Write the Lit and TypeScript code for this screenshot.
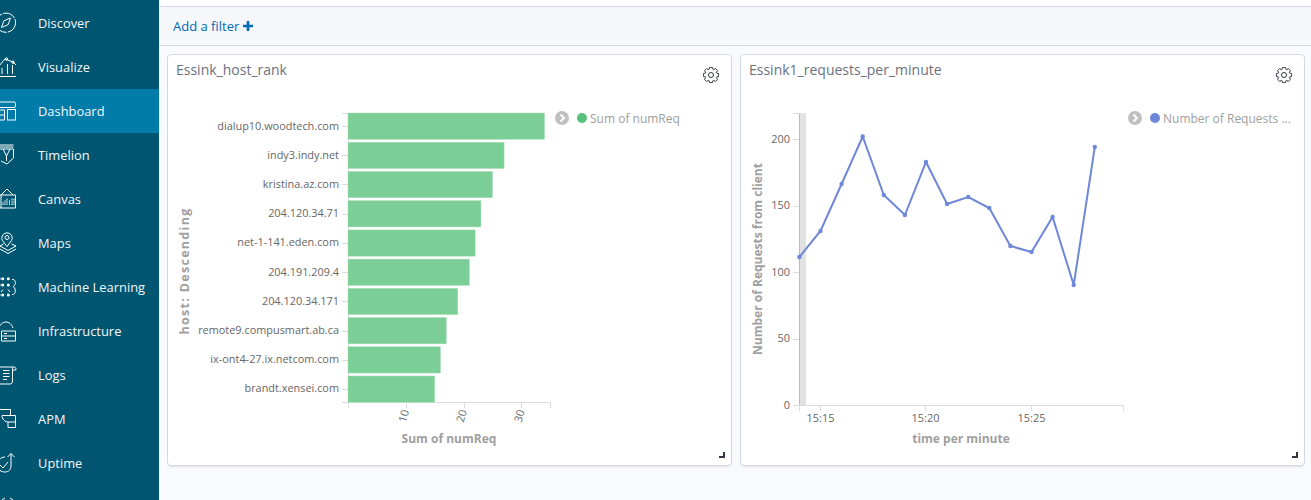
import { LitElement, html, svg, css } from "lit";
import { customElement } from "lit/decorators.js";

// y = 0 is the row centre, x = 0 is the window edge; most icons run off the left
const icons: Record<string, unknown> = {
  Discover: svg`<circle cx="6" cy="-.3" r="9.6" stroke-dasharray="13 1 13 1"/><path d="M10.5-5 8.2 1.6 1.5 4.5 3.8-2.2Z"/>`,
  Visualize: svg`<path d="M0 9.5H16M-1-1 5-8 13-5 16-2M2 7V1M7.5 7V-3M12.5 7V-2"/><circle cx="6.5" cy="-8" r="1.2"/><circle cx="13" cy="-4.8" r="1.2"/>`,
  Dashboard: svg`<rect x="-2" y="-9" width="17.5" height="5.5" rx="1.5"/><rect x="7.5" y="-1.5" width="8" height="10.5"/><path d="M-2-1H4.5V9H-2M-2 4H4.5"/>`,
  Timelion: svg`<path d="M0-10H13.5M-1-8H13.5M-1-6H13.5V3L7 9 1 6M3-6 6.5 1 10-6M6.5 1V6"/>`,
  Canvas: svg`<path d="M1-4 7-10 13-4M-1-4H15.5V9H-1ZM1-4V9"/><path d="M3 6V3M5 6V1M7 6V-1M9.5 6V1M12 6V-1M14 6V-1" stroke-dasharray="1.6 .6"/>`,
  Maps: svg`<path d="M7 3.5 3.6-1A5.2 5.2 0 1 1 10.4-1Z"/><circle cx="7" cy="-5.5" r="2"/><path d="M3.5 1 0 3 8 7.5 16 3 11.5 1M0 6 8 10.5 16 6"/>`,
  "Machine Learning": svg`<g fill="#fff" stroke="none">${[-8.3, -2, 8].map(y => [-1, 2.7, 8.3].map(x => svg`<circle cx=${x} cy=${y} r="1.5"/>`))}</g><path d="M12-7.500C15-8 16-5 15-2.500L13.500-.5 15 2C16 5 14.500 8 12 7.500M3 2.500 1 5M8 2.500 10 5"/>`,
  Infrastructure: svg`<path d="M-1-3C0-7 3-9 6-9 9-9 11.500-7 13-3M1.500 0H15.500V10H1.500ZM1.500 5H15.500M4 2.500H7M4 7.500H7"/>`,
  Logs: svg`<path d="M-1-8H14C15.500-8 16-7 16-5.500V-5H12.500V6C12.500 8 11.500 9 10 9H-1M12-8C12.500-7.500 12.500-6 12.500-5M3-4.500H9.500M3-1.500H9.500M3 1.500H9.500M3 4.500H7"/>`,
  APM: svg`<path d="M-1-9.500H10.500V-3.500M2-3.500H15.500V8.500H8V3H15.500M2-3.500C2 0 5 3 8 3"/>`,
  Uptime: svg`<path d="M5-6C0-6-2-2-2 2-2 7 1 9 5 9 9 9 11 6 11 3V-9.500M7.500-6 11-9.500 14.500-6M0 2 3 5 8-1"/>`,
  more: svg`<path d="M2 4 5 2M10 2 13 4"/>`,
};

const NAV = ["Discover", "Visualize", "Dashboard", "Timelion", "Canvas", "Maps", "Machine Learning", "Infrastructure", "Logs", "APM", "Uptime"];

const HOSTS: [string, number][] = [
  ["dialup10.woodtech.com", 34],
  ["indy3.indy.net", 27],
  ["kristina.az.com", 25],
  ["204.120.34.71", 23],
  ["net-1-141.eden.com", 22],
  ["204.191.209.4", 21],
  ["204.120.34.171", 19],
  ["remote9.compusmart.ab.ca", 17],
  ["ix-ont4-27.ix.netcom.com", 16],
  ["brandt.xensei.com", 15],
];

const REQUESTS = [257, 231, 184, 136.5, 195, 215, 162, 204, 197, 208, 246, 252, 217, 285, 147];

function gearPath() {
  let d = "";
  for (let i = 0; i < 8; i++) {
    const a = (i * Math.PI) / 4 - Math.PI / 2;
    const pts: [number, number][] = [[6, -0.32], [7.8, -0.2], [7.8, 0.2], [6, 0.32]];
    for (const [r, o] of pts) {
      const x = 8 + r * Math.cos(a + o);
      const y = 8 + r * Math.sin(a + o);
      d += `${d ? "L" : "M"}${x.toFixed(2)} ${y.toFixed(2)}`;
    }
  }
  return d + "Z";
}

@customElement("app-root")
export class AppRoot extends LitElement {
  static styles = css`
    :host {
      display: flex;
      height: 500px;
      overflow: hidden;
      background: #f9fafd;
      font-family: "Open Sans", "Noto Sans", sans-serif;
    }
    .sidebar {
      flex: 0 0 159px;
      padding-top: 1px;
      background: #005571;
      color: #f5f7fa;
      font-size: 12.9px;
    }
    .nav-item {
      display: flex;
      align-items: center;
      gap: 21px;
      height: 44px;
    }
    .nav-item.active {
      background: #017ba7;
    }
    .nav-icon {
      flex: none;
      width: 17px;
      height: 22px;
      overflow: hidden;
      fill: none;
      stroke: #fff;
      stroke-width: 1;
    }
    .main {
      flex: 1;
      min-width: 0;
      display: flex;
      flex-direction: column;
    }
    .top-strip {
      height: 6px;
      background: #fff;
      border-bottom: 1px solid #d3dae6;
    }
    .filter-bar {
      display: flex;
      align-items: center;
      gap: 4px;
      height: 38px;
      padding: 0 14px;
      background: #f5f7fa;
      border-bottom: 1px solid #d3dae6;
      color: #006bb4;
      font-size: 13px;
    }
    .plus {
      fill: #006bb4;
    }
    .grid {
      display: grid;
      grid-template-columns: 565px 565px;
      gap: 8px;
      padding: 8px;
    }
    .panel {
      position: relative;
      box-sizing: border-box;
      height: 412px;
      background: #fff;
      border: 1px solid #d3dae6;
      border-radius: 4px;
      box-shadow: 0 2px 2px -1px rgba(152, 162, 179, 0.3);
    }
    .panel-head {
      display: flex;
      justify-content: space-between;
      height: 37px;
      padding: 5px 12px 0 8px;
      box-sizing: border-box;
    }
    .panel-title {
      color: #6b7280;
      font-size: 14px;
      line-height: 20px;
    }
    .gear {
      width: 16px;
      height: 16px;
      margin-top: 7px;
      fill: none;
      stroke: #343741;
      stroke-width: 1;
      stroke-linejoin: round;
    }
    .panel-body {
      display: flex;
      align-items: flex-start;
    }
    .chart {
      display: block;
      flex: none;
    }
    .chart text {
      font-family: "Open Sans", "Noto Sans", sans-serif;
      font-size: 10.9px;
      fill: #666;
    }
    .chart .axis-title {
      font-size: 12px;
      font-weight: 700;
      fill: #a0a0a0;
    }
    .chart .axis-title.spaced {
      font-size: 12.5px;
      letter-spacing: 1.3px;
    }
    .axis {
      stroke: #ddd;
      stroke-width: 1;
      fill: none;
    }
    .legend {
      display: flex;
      align-items: center;
      height: 16px;
      margin-top: 18px;
      color: #a0a0a0;
      font-size: 12px;
      white-space: nowrap;
    }
    .legend-toggle {
      flex: none;
      width: 14px;
      height: 14px;
      margin-right: 8px;
    }
    .legend-dot {
      flex: none;
      width: 10px;
      height: 10px;
      margin-right: 3px;
      border-radius: 50%;
    }
    .resize {
      position: absolute;
      right: 6px;
      bottom: 7px;
      width: 4px;
      height: 4px;
      border-right: 2px solid #343741;
      border-bottom: 2px solid #343741;
    }
  `;

  private renderIcon(name: string) {
    return html`<svg class="nav-icon" viewBox="0 -11 17 22">${icons[name]}</svg>`;
  }

  private renderPanelHead(title: string) {
    return html`<div class="panel-head">
      <span class="panel-title">${title}</span>
      <svg class="gear" viewBox="0 0 16 16"><path d=${gearPath()} /><circle cx="8" cy="8" r="2.5" /></svg>
    </div>`;
  }

  private renderLegend(label: string, color: string) {
    return html`<div class="legend">
      <svg class="legend-toggle" viewBox="0 0 14 14">
        <circle cx="7" cy="7" r="7" fill="#c0c0c0" />
        <path d="M5.500 3.500 9 7 5.500 10.500" fill="none" stroke="#fff" stroke-width="2" />
      </svg>
      <span class="legend-dot" style="background:${color}"></span>
      <span>${label}</span>
    </div>`;
  }

  private renderHostChart() {
    const x0 = 348;
    const unit = 5.78;
    const pitch = 29.22;
    return svg`
      <path class="axis" d="M342 113.500H348.500V402.500M342 402.500H550.500V408M348.500 402.500V408" />
      ${HOSTS.map(([host, value], i) => {
        const top = 113 + i * pitch;
        return svg`
          <path class="axis" d="M342 ${Math.round(top + 13) + 0.5}H348" />
          <rect x=${x0} y=${top} width=${value * unit} height="26.3" fill="#7bce96" stroke="#a9e0ba" stroke-width=".5" />
          <text x="339" y=${top + 16.5} text-anchor="end">${host}</text>
        `;
      })}
      ${[10, 20, 30].map(v => {
        const x = x0 + v * unit;
        return svg`
          <path class="axis" d="M${Math.round(x) + 0.5} 402.500V408" />
          <text transform="translate(${x} 423) rotate(-75)">${v}</text>
        `;
      })}
      <text class="axis-title" x="449" y="443" text-anchor="middle">Sum of numReq</text>
      <text class="axis-title spaced" transform="translate(189 271) rotate(-90)" text-anchor="middle">host: Descending</text>
    `;
  }

  private renderRequestChart() {
    const xs = REQUESTS.map((_, i) => 799.4 + i * 21.1);
    const line = REQUESTS.map((y, i) => `${xs[i].toFixed(1)},${y}`).join(" ");
    const yTicks: [string, number][] = [["200", 139], ["150", 205.5], ["100", 272], ["50", 338.5], ["0", 405]];
    const xTicks: [string, number][] = [["15:15", 820.5], ["15:20", 925.5], ["15:25", 1031.5]];
    return svg`
      <rect x="800" y="113" width="6" height="292" fill="#e2e2e2" />
      <path d="M799.500 113V405" stroke="#bbb" fill="none" />
      <path class="axis" d="M793 113.500H800M793 405.500H1123.500V411M799.500 405.500V411" />
      ${yTicks.map(([label, y]) => svg`
        <path class="axis" d="M793 ${Math.round(y) + 0.5}H799" />
        <text x="790" y=${y + 3.5} text-anchor="end">${label}</text>
      `)}
      ${xTicks.map(([label, x]) => svg`
        <path class="axis" d="M${x} 405.500V411" />
        <text x=${x} y="422" text-anchor="middle">${label}</text>
      `)}
      <polyline points=${line} fill="none" stroke="#6f87d8" stroke-width="2" />
      ${REQUESTS.map((y, i) => svg`<circle cx=${xs[i]} cy=${y} r="2.200" fill="#6f87d8" />`)}
      <text class="axis-title" x="961" y="443" text-anchor="middle">time per minute</text>
      <text class="axis-title" transform="translate(762 259) rotate(-90)" text-anchor="middle">Number of Requests from client</text>
    `;
  }

  render() {
    return html`
      <nav class="sidebar">
        ${NAV.map(
          name => html`<div class="nav-item ${name === "Dashboard" ? "active" : ""}">
            ${this.renderIcon(name)}<span>${name}</span>
          </div>`
        )}
        <div class="nav-item"><svg class="nav-icon" viewBox="0 0 17 22">${icons.more}</svg></div>
      </nav>
      <div class="main">
        <div class="top-strip"></div>
        <div class="filter-bar">
          <span>Add a filter</span>
          <svg class="plus" width="10" height="10" viewBox="0 0 10 10"><path d="M3.700 0H6.300V3.700H10V6.300H6.300V10H3.700V6.300H0V3.700H3.700Z" /></svg>
        </div>
        <div class="grid">
          <section class="panel">
            ${this.renderPanelHead("Essink_host_rank")}
            <div class="panel-body">
              <svg class="chart" width="387" height="372" viewBox="168 92 387 372">${this.renderHostChart()}</svg>
              ${this.renderLegend("Sum of numReq", "#57c17b")}
            </div>
            <span class="resize"></span>
          </section>
          <section class="panel">
            ${this.renderPanelHead("Essink1_requests_per_minute")}
            <div class="panel-body">
              <svg class="chart" width="387" height="372" viewBox="741 92 387 372">${this.renderRequestChart()}</svg>
              ${this.renderLegend("Number of Requests ...", "#6f87d8")}
            </div>
            <span class="resize"></span>
          </section>
        </div>
      </div>
    `;
  }
}
